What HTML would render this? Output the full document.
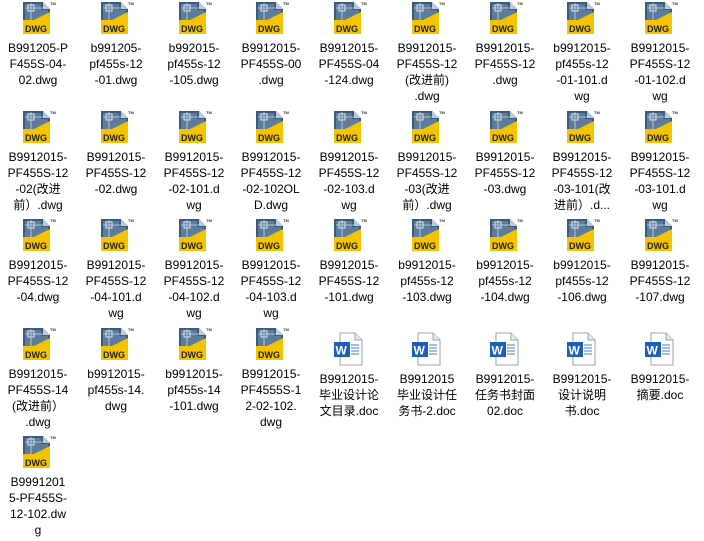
<!DOCTYPE html><html><head><meta charset="utf-8"><style>
body{margin:0;width:704px;height:541px;background:#fff;overflow:hidden;position:relative;font-family:"Liberation Sans","Noto Sans CJK SC",sans-serif;font-size:12px;color:#000}
.c{position:absolute;width:78px;text-align:center;line-height:16px}
.c svg{display:block;margin:0 auto}
.t{margin-top:4px;white-space:nowrap}
</style></head><body>
<svg width="0" height="0" style="position:absolute"><defs>
<symbol id="dwg" viewBox="0 0 36 36">
<path d="M3 2H23L30 9V34H3Z" fill="#3d5a7a"/>
<path d="M23 2V9H30Z" fill="#b8c8d8"/>
<path d="M5 4H21V10H28V20H5Z" fill="#5d7c9c"/>
<rect x="8" y="5" width="6" height="6" fill="none" stroke="#dfe8f0" stroke-width="1"/>
<path d="M5 8H26M11 3V20" stroke="#c9d6e3" stroke-width=".8"/>
<path d="M3 20H30V34H3Z" fill="#f5c400"/>
<path d="M14 20L30 12V20Z" fill="#f5c400"/>
<text x="5" y="32" font-family="Liberation Sans" font-weight="bold" font-size="9" fill="#222">DWG</text>
<text x="30" y="5" font-family="Liberation Sans" font-weight="bold" font-size="4" fill="#333">TM</text>
</symbol>
<symbol id="doc" viewBox="0 0 36 36">
<path d="M9 2H24L31 9V34H9Z" fill="#fff" stroke="#9aa4b0"/>
<path d="M24 2V9H31" fill="#e6e9ee" stroke="#9aa4b0"/>
<path d="M20 14H28M20 17H28M20 20H28M20 23H28" stroke="#4a7fc0" stroke-width="1"/>
<rect x="3" y="11" width="16" height="15" fill="#1f5fb8"/>
<text x="4.5" y="23.5" font-family="Liberation Sans" font-weight="bold" font-size="12" fill="#fff">W</text>
</symbol>
</defs></svg>
<div id="g"></div>
<script>
var d=[
["B991205-P|F455S-04-|02.dwg","b991205-|pf455s-12|-01.dwg","b992015-|pf455s-12|-105.dwg","B9912015-|PF455S-00|.dwg","B9912015-|PF455S-04|-124.dwg","B9912015-|PF455S-12|(改进前)|.dwg","B9912015-|PF455S-12|.dwg","b9912015-|pf455s-12|-01-101.d|wg","B9912015-|PF455S-12|-01-102.d|wg"],
["B9912015-|PF455S-12|-02(改进|前）.dwg","B9912015-|PF455S-12|-02.dwg","B9912015-|PF455S-12|-02-101.d|wg","B9912015-|PF455S-12|-02-102OL|D.dwg","B9912015-|PF455S-12|-02-103.d|wg","B9912015-|PF455S-12|-03(改进|前）.dwg","B9912015-|PF455S-12|-03.dwg","B9912015-|PF455S-12|-03-101(改|进前）.d...","B9912015-|PF455S-12|-03-101.d|wg"],
["B9912015-|PF455S-12|-04.dwg","B9912015-|PF455S-12|-04-101.d|wg","B9912015-|PF455S-12|-04-102.d|wg","B9912015-|PF455S-12|-04-103.d|wg","B9912015-|PF455S-12|-101.dwg","b9912015-|pf455s-12|-103.dwg","b9912015-|pf455s-12|-104.dwg","b9912015-|pf455s-12|-106.dwg","B9912015-|PF455S-12|-107.dwg"],
["B9912015-|PF455S-14|(改进前）|.dwg","b9912015-|pf455s-14.|dwg","b9912015-|pf455s-14|-101.dwg","B9912015-|PF4555S-1|2-02-102.|dwg","*B9912015-|毕业设计论|文目录.doc","*B9912015|毕业设计任|务书-2.doc","*B9912015-|任务书封面|02.doc","*B9912015-|设计说明|书.doc","*B9912015-|摘要.doc"],
["B9991201|5-PF455S-|12-102.dw|g"]];
var h="";
d.forEach(function(r,ri){r.forEach(function(s,ci){
var doc=s[0]=="*";if(doc)s=s.slice(1);
var x=Math.round(-1+ci*77.75),y=Math.round(ri*108.6)+(doc?5:0);
h+='<div class="c" style="left:'+x+'px;top:'+y+'px"><svg width="36" height="36"><use href="#'+(doc?'doc':'dwg')+'"/></svg><div class="t">'+s.split("|").join("<br>")+'</div></div>';
});});
document.getElementById("g").innerHTML=h;
</script>
</body></html>
